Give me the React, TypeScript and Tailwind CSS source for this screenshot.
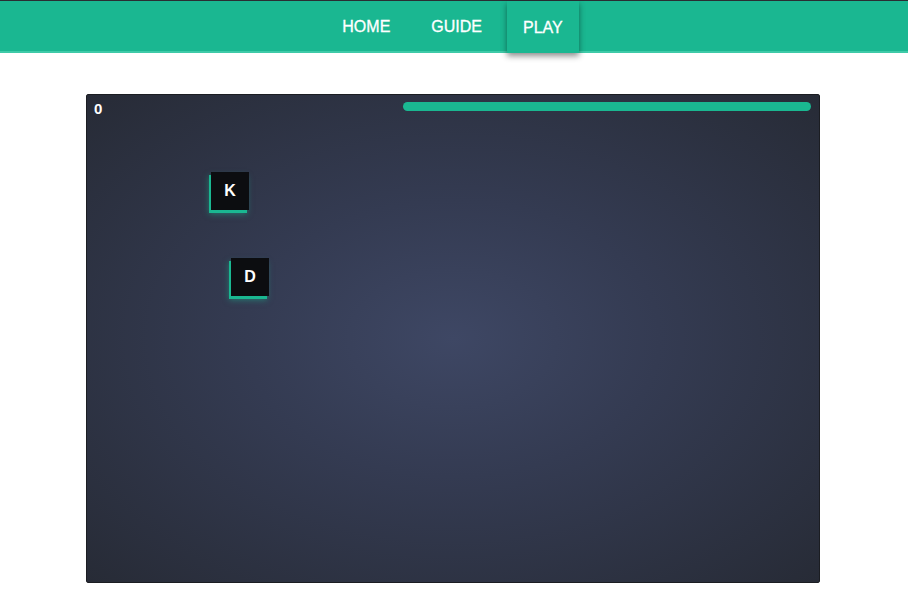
import React from "react";

const keys = [
  { letter: "K", left: 124, top: 77 },
  { letter: "D", left: 144, top: 163 },
];

export default function App() {
  return (
    <div className="min-h-screen bg-white font-['Liberation_Sans',Arial,sans-serif]">
      {/* nav */}
      <nav className="h-[53px] border-t border-[#2a2d33] bg-[#1ab791] border-b-2 border-b-[#3fcaa8]">
        <ul className="flex justify-center gap-[9px] h-full pr-[3px]">
          <li className="px-4 pt-[2px] flex items-center text-white text-[16px] uppercase [-webkit-text-stroke:0.3px_white]">Home</li>
          <li className="px-4 pt-[2px] flex items-center text-white text-[16px] uppercase [-webkit-text-stroke:0.3px_white]">Guide</li>
          <li className="px-4 pt-[2px] flex items-center text-white text-[16px] uppercase [-webkit-text-stroke:0.3px_white] bg-[#1ab791] h-[52px] shadow-[0_3px_6px_rgba(0,0,0,0.45)] relative z-10">
            Play
          </li>
        </ul>
      </nav>

      {/* game board */}
      <div className="mt-[41px] ml-[86px] w-[734px] h-[489px] border border-[#1b1d22] rounded-[2px] relative overflow-hidden bg-[radial-gradient(ellipse_at_50%_50%,#3e4764_0%,#343b52_40%,#272b36_100%)]">
        <div className="absolute left-[7px] top-[3px] text-white font-bold text-[15px]">0</div>
        <div className="absolute left-[316px] top-[7px] w-[408px] h-[9px] rounded-full bg-[#1ab791]" />
        {keys.map((k) => (
          <div
            key={k.letter}
            className="absolute w-[38px] h-[38px] bg-[#0c0d10] text-white font-bold text-[16px] flex items-center justify-center shadow-[-2px_3px_0_#1ab791,-2px_4px_6px_rgba(26,183,145,0.5)]"
            style={{ left: k.left, top: k.top }}
          >
            {k.letter}
          </div>
        ))}
      </div>
    </div>
  );
}
